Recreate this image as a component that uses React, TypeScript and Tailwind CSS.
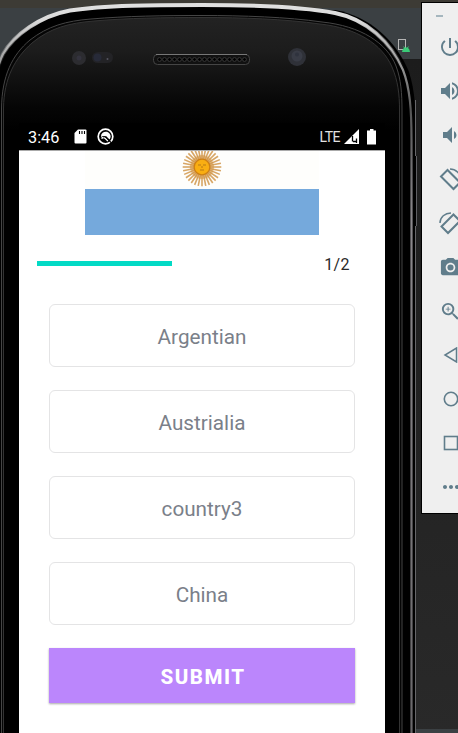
import React from "react";
import {
  MdPowerSettingsNew,
  MdVolumeUp,
  MdVolumeDown,
  MdCameraAlt,
  MdZoomIn,
  MdMoreHoriz,
} from "react-icons/md";

const options = ["Argentian", "Austrialia", "country3", "China"];

const rays = Array.from({ length: 32 }, (_, i) => (i * 360) / 32);
const holes = Array.from({ length: 18 }, (_, i) => 159.5 + i * 5);

const rimPath =
  "M-9 130C-8 90 -4 68 3 54C14 35 40 16 70 10.500C105 5 155 5 202 5C250 5 305 7.500 335 13C366 19 391 42 403 70C410 88 411.500 110 411.500 140V740";

function PhoneFrame() {
  return (
    <svg className="absolute inset-0" width="458" height="733" viewBox="0 0 458 733" fill="none">
      <defs>
        <linearGradient id="face" x1="0" y1="15" x2="0" y2="733" gradientUnits="userSpaceOnUse">
          <stop offset="0" stopColor="#232323" />
          <stop offset="0.05" stopColor="#1c1c1c" />
          <stop offset="0.13" stopColor="#050505" />
          <stop offset="0.16" stopColor="#000" />
          <stop offset="1" stopColor="#000" />
        </linearGradient>
        <linearGradient id="rim" x1="0" y1="0" x2="0" y2="733" gradientUnits="userSpaceOnUse">
          <stop offset="0" stopColor="#e6e6e6" />
          <stop offset="0.035" stopColor="#d2d2d2" />
          <stop offset="0.08" stopColor="#a0a0a0" />
          <stop offset="0.15" stopColor="#555" />
          <stop offset="0.3" stopColor="#8b888c" />
          <stop offset="1" stopColor="#69676a" />
        </linearGradient>
        <linearGradient id="shine" x1="0" y1="0" x2="0" y2="70" gradientUnits="userSpaceOnUse">
          <stop offset="0" stopColor="#e2e2e2" />
          <stop offset="0.3" stopColor="#dadada" />
          <stop offset="1" stopColor="#999" stopOpacity="0" />
        </linearGradient>
      </defs>
      <path d={`${rimPath}H-9Z`} fill="#000" />
      <path d="M335 10C370 16 397 42 409 72C415 90 416 112 416 140V740H300V10Z" fill="#000" />
      <path d="M415.500 100V156M415.500 226V740" stroke="#67676a" />
      <path d="M416.500 156V226" stroke="#606064" />
      <path d={rimPath} stroke="url(#rim)" strokeWidth="2.200" />
      <path d={rimPath} stroke="url(#shine)" strokeWidth="4" />
      <path d="M1.500 740V108C2 76 12 55 30 40C48 26 66 21 91 19C126 16 165 15.500 202 15.500C242 15.500 288 17 322 22C361 26 387 43 396 66C401 79 402 94 402 110V740" fill="#050505" stroke="#454545" />
      <path d="M3.500 740V108C4 78 15 58 32 43C50 28 69 23 94 21C128 18 165 17.500 202 17.500C242 17.500 285 19 320 24C357 28 382 44 392 67C398 81 399.500 94 399.500 110V740" fill="url(#face)" stroke="#333" />
      <circle cx="79" cy="58" r="7" fill="#2c2c30" />
      <circle cx="79" cy="58" r="2.500" fill="#34333e" />
      <rect x="92" y="52" width="21" height="11" rx="5.500" fill="#232326" />
      <circle cx="97.500" cy="57.500" r="4" fill="#272a38" />
      <circle cx="107.500" cy="59" r="1" fill="#555460" />
      <rect x="153.500" y="54.500" width="96" height="10" rx="4" fill="#111" stroke="#454545" />
      <path d="M156 54.500H247" stroke="#777" />
      {holes.map((x) => (
        <circle key={x} cx={x} cy="59.500" r="1.900" fill="#000" stroke="#3c3c3c" strokeWidth="0.900" />
      ))}
      <circle cx="297" cy="57" r="9" fill="#2f3138" />
      <circle cx="297" cy="56" r="5.500" fill="#393c46" />
      <circle cx="297" cy="54.500" r="2" fill="#2f333e" />
    </svg>
  );
}

function Sun() {
  return (
    <svg width="40" height="40" viewBox="-20 -20 40 40" className="-mt-[4px] shrink-0">
      <circle r="12" fill="#d9a45a" opacity="0.6" />
      {rays.map((a) => (
        <path key={a} d="M0-6V-19.300" stroke="#cf9140" strokeWidth="1.600" transform={`rotate(${a})`} opacity="0.8" />
      ))}
      <circle r="8.500" fill="#ce7f14" />
      <circle r="7.200" fill="#f9ae12" />
      <path d="M-4-2H-1M1-2H4M0-1V1M-2 3H2" stroke="#b97a12" strokeWidth="1" />
    </svg>
  );
}

function StatusBar() {
  return (
    <div className="flex h-[27px] shrink-0 items-center bg-black pr-[9px] pl-[9px] text-white">
      <span className="w-[46px] pt-[3px] text-[16.300px]">3:46</span>
      <svg width="13" height="15" viewBox="0 0 13 15">
        <path d="M4 .5H11.500Q12.500.500 12.500 1.500V13.500Q12.500 14.500 11.500 14.500H1.500Q.5 14.500.5 13.500V4Z" fill="#fff" />
        <path d="M5.500 2V5M8 2V5M10.500 2V5" stroke="#000" strokeWidth="1.100" />
      </svg>
      <svg className="ml-[10px]" width="17" height="17" viewBox="0 0 17 17" fill="none">
        <circle cx="8.500" cy="8.500" r="7.300" stroke="#fff" strokeWidth="1.700" />
        <path d="M4 9A4.800 4.800 0 1 1 12.500 11.500L9 8L7.500 9L6 8Z" fill="#fff" />
        <path d="M4.500 10.500Q6.500 8.500 8.500 10.500L11 13" stroke="#fff" strokeWidth="1.600" />
        <path d="M6 9Q8 8 9.500 10L15 15.500" stroke="#000" strokeWidth="1.100" />
      </svg>
      <span className="ml-auto pt-px text-[14px] tracking-[-0.500px] text-[#e2e2e2]">LTE</span>
      <svg className="ml-[4px]" width="15" height="15" viewBox="0 0 15 15">
        <path d="M0 15L15 0V15Z" fill="#fff" />
        <path d="M8.500 7V12.500M9 12.500H12M12.500 9.500V14" stroke="#000" strokeWidth="1.300" fill="none" />
      </svg>
      <svg className="ml-[8px]" width="9" height="16" viewBox="0 0 9 16">
        <path d="M3 0H6.500V1.500H9V15.500H0V1.500H3Z" fill="#fff" />
      </svg>
    </div>
  );
}

function Screen() {
  return (
    <main className="absolute top-[123px] left-[19px] flex h-[610px] w-[366px] flex-col bg-white">
      <StatusBar />
      <div className="h-px shrink-0 bg-[#aaa]" />
      <div className="mx-auto w-[234px]">
        <div className="flex h-[38px] justify-center overflow-hidden bg-[#fefefc]">
          <Sun />
        </div>
        <div className="h-[46px] bg-[#75a9dc]" />
      </div>
      <div className="mt-[16px] flex h-[24px] items-center pr-[35px] pl-[18px]">
        <div className="h-[5px] w-[135px] bg-[#03dac5]" />
        <span className="ml-auto pt-[4px] text-[16px] tracking-[0.400px] text-[#292929]">1/2</span>
      </div>
      <div className="mt-[29px] flex flex-col gap-[23px] px-[30px]">
        {options.map((o) => (
          <button
            key={o}
            className="flex h-[63px] items-center justify-center rounded-[6px] border-[1.500px] border-[#e4e4e5] pt-[4px] text-[20.700px] text-[#7a8089]"
          >
            {o}
          </button>
        ))}
        <button className="flex h-[55px] items-center justify-center bg-[#bb86fc] pt-[3px] pl-[2px] text-[20.500px] font-extrabold tracking-[1.500px] text-white shadow-[0_1px_2px_rgba(0,0,0,0.35)]">
          SUBMIT
        </button>
      </div>
    </main>
  );
}

function Toolbar() {
  const slot = "flex h-[44px] w-[58px] shrink-0 items-center justify-center";
  return (
    <aside className="absolute top-[2px] left-[421px] flex h-[512px] w-[70px] flex-col overflow-hidden border border-black bg-[#efefef] text-[#607d8b]">
      <div className="mt-[12px] ml-[14px] h-[2px] w-[7px] shrink-0 bg-[#a5b6be]" />
      <div className="mt-[8px] flex flex-col">
        <div className={slot}>
          <MdPowerSettingsNew size={24} className="-translate-x-px" />
        </div>
        <div className={slot}>
          <MdVolumeUp size={24} className="-translate-x-px" />
        </div>
        <div className={slot}>
          <MdVolumeDown size={24} className="-translate-x-px" />
        </div>
        <div className={slot}>
          <svg className="-translate-x-px" width="23" height="23" viewBox="0 0 23 23" fill="none" stroke="currentColor" strokeWidth="2">
            <path d="M8.500 2L2 8.500L14.500 21L21 14.500Z" />
            <path d="M11 1C17 1 22 6 22 12" strokeWidth="1.500" />
          </svg>
        </div>
        <div className={slot}>
          <svg className="-translate-x-px" width="23" height="23" viewBox="0 0 23 23" fill="none" stroke="currentColor" strokeWidth="2">
            <path d="M14.500 2.500L21 9L9 21L2.500 14.500Z" />
            <path d="M1 11C1 5 6 1 12 1" strokeWidth="1.500" />
          </svg>
        </div>
        <div className={slot}>
          <MdCameraAlt size={23} className="-translate-x-px" />
        </div>
        <div className={slot}>
          <MdZoomIn size={23} className="-translate-x-px" />
        </div>
        <div className={slot}>
          <svg width="16" height="16" viewBox="0 0 16 16" fill="none" stroke="currentColor" strokeWidth="1.500">
            <path d="M13.500 1V15L2 8Z" />
          </svg>
        </div>
        <div className={slot}>
          <svg width="16" height="16" viewBox="0 0 16 16" fill="none" stroke="currentColor" strokeWidth="1.600">
            <circle cx="8" cy="8" r="6.700" />
          </svg>
        </div>
        <div className={slot}>
          <svg width="16" height="16" viewBox="0 0 16 16" fill="none" stroke="currentColor" strokeWidth="1.600">
            <rect x="1.500" y="1.500" width="13" height="13" />
          </svg>
        </div>
        <div className={slot}>
          <MdMoreHoriz size={24} />
        </div>
      </div>
    </aside>
  );
}

export default function App() {
  return (
    <div className="relative h-[733px] w-[458px] overflow-hidden bg-[#282828] font-['Roboto',sans-serif]">
      <div className="h-[8px] bg-[#3d3b35]" />
      <div className="flex h-[51px] justify-end bg-[#3b4043] pt-[31px] pr-[52px]">
        <div className="h-[11px] w-[8px] border border-[#b5b5b5]" />
      </div>
      <div className="h-[674px] bg-linear-to-b from-[#1c1c1c] to-[#292929]" />
      <PhoneFrame />
      <svg className="absolute top-[46px] left-[401px]" width="10" height="6" viewBox="0 0 10 6">
        <path d="M1 6Q1.500 2.500 3 2L2 0L4 1.500H6L8 0L7 2Q8.500 2.500 9 6Z" fill="#3acb77" />
      </svg>
      <Screen />
      <Toolbar />
      <div className="absolute right-0 bottom-0 h-[4px] w-[42px] bg-[#3b4043]" />
    </div>
  );
}
